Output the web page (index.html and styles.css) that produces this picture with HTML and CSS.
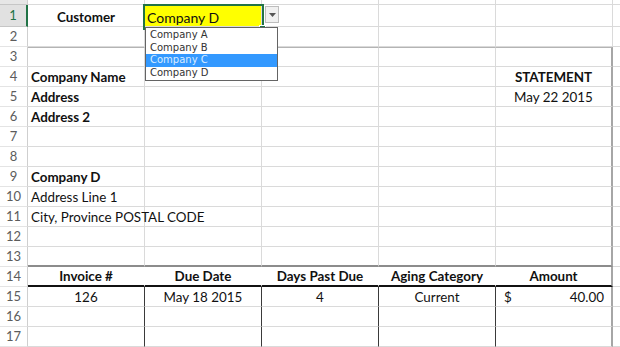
FILE: index.html
```html
<!DOCTYPE html>
<html lang="en">

<head>
    <meta charset="UTF-8">
    <meta name="viewport" content="width=device-width, initial-scale=1.0">
    <title>Statement</title>
    <link rel="stylesheet" href="styles.css">
</head>

<body>
    <div class="wrap">
        <table class="sheet">
            <colgroup>
                <col class="c-num">
                <col class="c-cell">
                <col class="c-cell">
                <col class="c-cell">
                <col class="c-cell">
                <col class="c-cell">
                <col class="c-rest">
            </colgroup>
            <tr class="r-top">
                <th class="rn"></th><td></td><td></td><td></td><td></td><td></td><td></td>
            </tr>
            <tr class="r-first">
                <th class="rn active">1</th>
                <td class="b center">Customer</td>
                <td class="pick">Company D</td>
                <td></td><td></td><td></td><td></td>
            </tr>
            <tr>
                <th class="rn">2</th><td></td><td></td><td></td><td></td><td></td><td></td>
            </tr>
            <tr class="box-top">
                <th class="rn">3</th><td></td><td></td><td></td><td></td><td class="box-r"></td><td></td>
            </tr>
            <tr>
                <th class="rn">4</th>
                <td class="b">Company Name</td><td></td><td></td><td></td>
                <td class="b center box-r">STATEMENT</td><td></td>
            </tr>
            <tr>
                <th class="rn">5</th>
                <td class="b">Address</td><td></td><td></td><td></td>
                <td class="center box-r">May 22 2015</td><td></td>
            </tr>
            <tr>
                <th class="rn">6</th>
                <td class="b">Address 2</td><td></td><td></td><td></td><td class="box-r"></td><td></td>
            </tr>
            <tr>
                <th class="rn">7</th><td></td><td></td><td></td><td></td><td class="box-r"></td><td></td>
            </tr>
            <tr>
                <th class="rn">8</th><td></td><td></td><td></td><td></td><td class="box-r"></td><td></td>
            </tr>
            <tr>
                <th class="rn">9</th>
                <td class="b">Company D</td><td></td><td></td><td></td><td class="box-r"></td><td></td>
            </tr>
            <tr>
                <th class="rn">10</th>
                <td class="over">Address Line 1</td><td></td><td></td><td></td><td class="box-r"></td><td></td>
            </tr>
            <tr>
                <th class="rn">11</th>
                <td class="over">City, Province POSTAL CODE</td><td></td><td></td><td></td><td class="box-r"></td><td></td>
            </tr>
            <tr>
                <th class="rn">12</th><td></td><td></td><td></td><td></td><td class="box-r"></td><td></td>
            </tr>
            <tr class="before-head">
                <th class="rn">13</th><td></td><td></td><td></td><td></td><td class="box-r"></td><td></td>
            </tr>
            <tr class="t-head">
                <th class="rn">14</th>
                <td class="b center">Invoice #</td>
                <td class="b center">Due Date</td>
                <td class="b center">Days Past Due</td>
                <td class="b center">Aging Category</td>
                <td class="b center box-r">Amount</td>
                <td></td>
            </tr>
            <tr class="t-body">
                <th class="rn">15</th>
                <td class="center">126</td>
                <td class="center">May 18 2015</td>
                <td class="center">4</td>
                <td class="center">Current</td>
                <td class="box-r money"><span>$</span><span>40.00</span></td>
                <td></td>
            </tr>
            <tr class="t-body">
                <th class="rn">16</th><td></td><td></td><td></td><td></td><td class="box-r"></td><td></td>
            </tr>
            <tr class="t-body">
                <th class="rn">17</th><td></td><td></td><td></td><td></td><td class="box-r"></td><td></td>
            </tr>
        </table>

        <!-- active cell frame and data validation dropdown -->
        <div class="sel-frame"><span class="handle"></span></div>
        <div class="dd-btn">
            <svg width="7" height="4" viewBox="0 0 7 4"><path d="M0 0H7L3.5 4Z" fill="#555"/></svg>
        </div>
        <ul class="dd-list">
            <li>Company A</li>
            <li>Company B</li>
            <li class="hl">Company C</li>
            <li>Company D</li>
        </ul>
    </div>
</body>

</html>
```

FILE: styles.css
```css
body {
    margin: 0;
    background: #fff;
    font-family: Lato, "Open Sans", sans-serif;
    color: #111;
}

.wrap {
    position: relative;
    width: 620px;
    height: 347px;
    overflow: hidden;
}

.sheet {
    border-collapse: separate;
    border-spacing: 0;
    table-layout: fixed;
    width: 640px;
    font-size: 13.4px;
}

.c-num {
    width: 28px;
}

.c-cell {
    width: 117px;
}

.c-rest {
    width: 60px;
}

.sheet tr {
    height: 20px;
}

.sheet .r-top {
    height: 5px;
}

.sheet .r-first {
    height: 22px;
}

.sheet td,
.sheet th {
    padding: 0 3px;
    border-right: 1px solid #dadada;
    border-bottom: 1px solid #dadada;
    vertical-align: bottom;
    line-height: 17px;
    white-space: nowrap;
    overflow: hidden;
    text-align: left;
}

.sheet td.over {
    overflow: visible;
}

/* row numbers */
.sheet th.rn {
    padding: 0;
    text-align: center;
    vertical-align: middle;
    font-weight: normal;
    font-size: 13px;
    color: #5c5c5c;
    border-right-color: #cfcfcf;
    border-bottom-color: #e4e4e4;
}

.r-top th.rn {
    background: #e6e6e6;
    border-bottom-color: #c6c6c6;
}

.sheet th.active {
    background: #e1e1e1;
    color: #217346;
    border-right: 2px solid #217346;
    border-bottom-color: #c6c6c6;
}

.b {
    font-weight: bold;
}

.sheet .center {
    text-align: center;
}

.sheet .pick {
    background: #ffff00;
    padding-left: 2px;
    font-size: 14px;
}

/* statement box */
.box-top td {
    border-top: 1px solid #b4b4b4;
}

.box-top td:last-child {
    border-top: none;
}

.sheet td.box-r {
    border-right: 2px solid #a6a6a6;
}

/* invoice table */
.before-head td {
    border-bottom: 2px solid #8c8c8c;
}

.before-head td:last-child {
    border-bottom: 1px solid #dadada;
}

.t-head td {
    border-right-color: #fff;
    border-bottom: 2px solid #111;
}

.t-head td:last-child {
    border-bottom: 1px solid #dadada;
}

.t-body td {
    border-right-color: #3a3a3a;
}

.t-body td:last-child {
    border-right-color: #dadada;
}

.money span:first-child {
    float: left;
    padding-left: 5px;
}

.money span:last-child {
    float: right;
    padding-right: 4px;
}

/* dropdown overlay */
.sel-frame {
    position: absolute;
    left: 143px;
    top: 4px;
    width: 117px;
    height: 22px;
    border: 2px solid #217346;
}

.handle {
    position: absolute;
    right: -4px;
    bottom: -4px;
    width: 5px;
    height: 5px;
    background: #217346;
    border: 1px solid #fff;
}

.dd-btn {
    position: absolute;
    left: 265px;
    top: 6px;
    width: 12px;
    height: 15px;
    background: #f0f0f0;
    border: 1px solid #bdbdbd;
    display: flex;
    align-items: center;
    justify-content: center;
}

.dd-list {
    position: absolute;
    left: 145px;
    top: 27px;
    width: 131px;
    margin: 0;
    padding: 1px 0;
    list-style: none;
    background: #fff;
    border: 1px solid #646464;
    font-family: "DejaVu Sans", sans-serif;
    font-size: 10px;
    color: #333;
}

.dd-list li {
    height: 12.5px;
    line-height: 12.5px;
    padding-left: 4px;
}

.dd-list .hl {
    background: #3399ff;
    color: #d9ecff;
}
```
